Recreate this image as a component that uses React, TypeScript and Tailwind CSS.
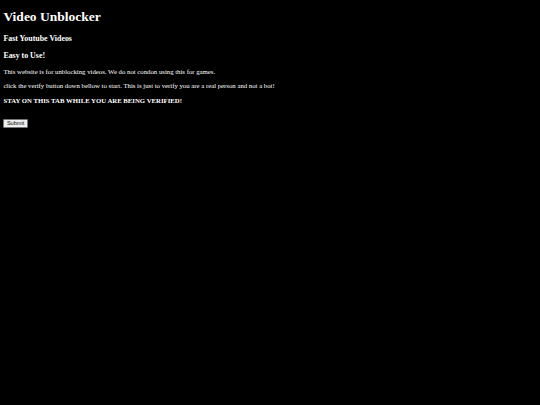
export default function App() {
  return (
    <div className="min-h-[405px] bg-black px-[3.375px] pt-[9.05px] text-white font-['Liberation_Serif','Times_New_Roman',serif]">
      <h1 className="text-[13.5px] leading-[15.51px] font-bold">Video Unblocker</h1>
      <h3 className="mt-[9.05px] text-[7.9px] leading-[9.07px] font-bold">Fast Youtube Videos</h3>
      <h3 className="mt-[7.9px] text-[7.9px] leading-[9.07px] font-bold">Easy to Use!</h3>
      <p className="mt-[7.9px] text-[6.75px] leading-[7.76px]">
        This website is for unblocking videos. We do not condon using this for games.
      </p>
      <p className="mt-[6.75px] text-[6.75px] leading-[7.76px]">
        click the verify button down bellow to start. This is just to verify you are a real person and not a bot!
      </p>
      <p className="mt-[6.75px] text-[6.75px] leading-[7.76px] font-bold">
        STAY ON THIS TAB WHILE YOU ARE BEING VERIFIED!
      </p>
      <div className="mt-[15px] flex">
        <button className="h-[8.6px] px-[2.5px] bg-[#efefef] border border-[#767676] rounded-[1px] text-[5.6px] leading-none text-black font-['Liberation_Sans',Arial,sans-serif]">
          Submit
        </button>
      </div>
    </div>
  );
}
